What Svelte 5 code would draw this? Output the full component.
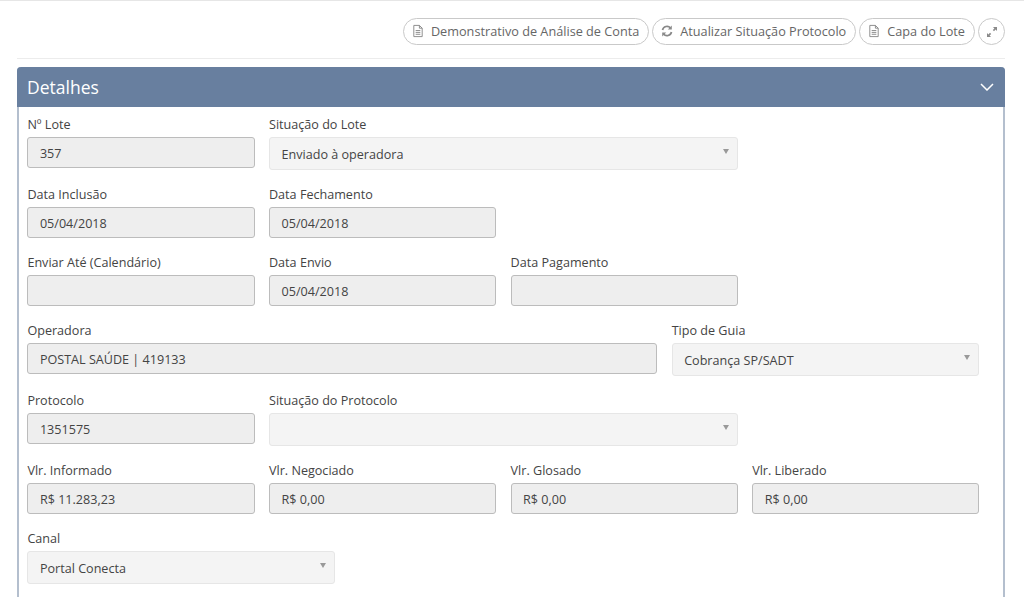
<script>
    const doc = "M3 1h6l3 3v9H3z M9 1v3h3 M5 6.500h5 M5 8.500h5 M5 10.500h5";

    const rows = [
        [
            { label: "Nº Lote", value: "357", span: 3 },
            { label: "Situação do Lote", value: "Enviado à operadora", span: 6, select: true }
        ],
        [
            { label: "Data Inclusão", value: "05/04/2018", span: 3 },
            { label: "Data Fechamento", value: "05/04/2018", span: 3 }
        ],
        [
            { label: "Enviar Até (Calendário)", value: "", span: 3 },
            { label: "Data Envio", value: "05/04/2018", span: 3 },
            { label: "Data Pagamento", value: "", span: 3 }
        ],
        [
            { label: "Operadora", value: "POSTAL SAÚDE | 419133", span: 8 },
            { label: "Tipo de Guia", value: "Cobrança SP/SADT", span: 4, select: true }
        ],
        [
            { label: "Protocolo", value: "1351575", span: 3 },
            { label: "Situação do Protocolo", value: "", span: 6, select: true }
        ],
        [
            { label: "Vlr. Informado", value: "R$ 11.283,23", span: 3 },
            { label: "Vlr. Negociado", value: "R$ 0,00", span: 3 },
            { label: "Vlr. Glosado", value: "R$ 0,00", span: 3 },
            { label: "Vlr. Liberado", value: "R$ 0,00", span: 3 }
        ],
        [
            { label: "Canal", value: "Portal Conecta", span: 4, select: true }
        ]
    ];
</script>

<div class="page">
    <div class="toolbar">
        <button class="pill">
            <svg width="14" height="14" viewBox="0 0 15 14"><path d={doc} /></svg>
            Demonstrativo de Análise de Conta
        </button>
        <button class="pill">
            <svg width="14" height="14" viewBox="0 0 14 14"><path class="thick" d="M2.5 6a4.6 4.6 0 0 1 8-2 M11.5 8a4.6 4.6 0 0 1-8 2" /><path class="solid" d="M11.8 1.5v4h-4z M2.2 12.5v-4h4z" /></svg>
            Atualizar Situação Protocolo
        </button>
        <button class="pill">
            <svg width="14" height="14" viewBox="0 0 15 14"><path d={doc} /></svg>
            Capa do Lote
        </button>
        <button class="pill round" aria-label="Expandir">
            <svg width="12" height="12" viewBox="0 0 12 12"><path class="solid" d="M7 1h4v4L9.600 3.600 8 5.200 6.800 4 8.400 2.400z M5 11H1V7l1.400 1.400L4 6.800 5.200 8 3.600 9.600z" /></svg>
        </button>
    </div>

    <section class="panel">
        <header class="panel-head">
            <h2>Detalhes</h2>
            <svg width="14" height="8" viewBox="0 0 14 8"><path d="M1 1l6 6 6-6" /></svg>
        </header>
        <div class="panel-body">
            {#each rows as row}
                <div class="row">
                    {#each row as f}
                        <div class="field" style="grid-column: span {f.span}">
                            <span class="label">{f.label}</span>
                            {#if f.select}
                                <div class="select">{f.value}<i class="caret"></i></div>
                            {:else}
                                <div class="input">{f.value}</div>
                            {/if}
                        </div>
                    {/each}
                </div>
            {/each}
        </div>
    </section>
</div>

<style>
    :global(body) {
        margin: 0;
        background: #fff;
    }

    .page {
        display: flex;
        flex-direction: column;
        height: 597px;
        overflow: hidden;
        box-sizing: border-box;
        border-top: 1px solid #e6e6e6;
        padding: 0 19px 0 17px;
        font-family: "Open Sans", sans-serif;
        font-size: 12.6px;
        color: #333;
    }

    .toolbar {
        display: flex;
        justify-content: flex-end;
        gap: 3px;
        flex: none;
        height: 58px;
        padding-top: 17px;
        box-sizing: border-box;
        border-bottom: 1px solid #ececec;
    }

    .pill {
        display: flex;
        align-items: center;
        gap: 6px;
        height: 27px;
        padding: 0 9px 2px 7px;
        border: 1px solid #c9c9c9;
        border-radius: 14px;
        background: #fff;
        color: #666;
        font-family: inherit;
        font-size: 12.7px;
        white-space: nowrap;
    }

    .pill.round {
        width: 27px;
        padding: 0;
        justify-content: center;
    }

    .pill svg path {
        fill: none;
        stroke: #888;
        stroke-width: 1;
    }

    .pill svg path.thick {
        stroke-width: 1.7;
    }

    .pill svg path.solid {
        fill: #8a8a8a;
        stroke: none;
    }

    .panel {
        flex: 1;
        margin-top: 8px;
        border-left: 2px solid #b4bfce;
        border-right: 2px solid #b4bfce;
        border-radius: 4px 4px 0 0;
    }

    .panel-head {
        display: flex;
        align-items: center;
        justify-content: space-between;
        height: 40px;
        margin: 0 -2px;
        padding: 0 11px 0 10px;
        background: #687f9f;
        border-radius: 4px 4px 0 0;
    }

    .panel-head h2 {
        margin: 0;
        font-size: 17.5px;
        font-weight: 400;
        color: #fff;
    }

    .panel-head svg path {
        fill: none;
        stroke: #fff;
        stroke-width: 1.5;
    }

    .panel-body {
        padding: 10px 23.6px 0 8.4px;
    }

    .row {
        display: grid;
        grid-template-columns: repeat(12, 1fr);
        column-gap: 14.4px;
        margin-bottom: 17px;
    }

    .label {
        display: block;
        height: 20px;
        line-height: 16px;
        color: #444;
    }

    .input,
    .select {
        box-sizing: border-box;
        position: relative;
        padding: 0 11.5px;
        white-space: nowrap;
        color: #444;
    }

    .input {
        height: 31px;
        line-height: 31px;
        background: #eee;
        border: 1px solid #bcbcbc;
        border-radius: 3px;
    }

    .select {
        height: 33px;
        line-height: 33px;
        background: #f4f4f4;
        border: 1px solid #e6e6e6;
        border-radius: 3px;
    }

    .caret {
        position: absolute;
        top: 11px;
        right: 8px;
        border-left: 3px solid transparent;
        border-right: 3px solid transparent;
        border-top: 5px solid #999;
    }
</style>
